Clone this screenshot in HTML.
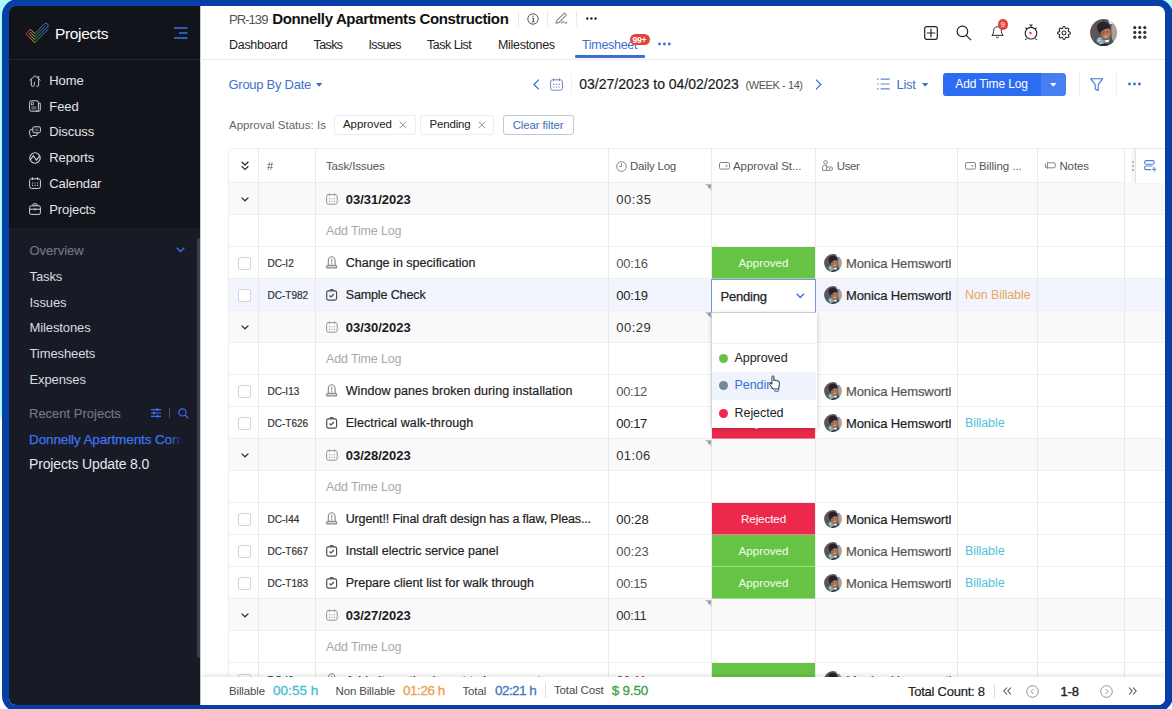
<!DOCTYPE html>
<html lang="en">
<head>
<meta charset="utf-8">
<title>Projects - Timesheet</title>
<style>
*{box-sizing:border-box;margin:0;padding:0}
html,body{width:1172px;height:709px;overflow:hidden}
body{font-family:"Liberation Sans",sans-serif;background:linear-gradient(180deg,#adfcf6 0%,#adfcf6 58.6%,#ffffff 59.4%,#ffffff 100%);position:relative;color:#222}
.frame{position:absolute;left:2px;top:-1px;width:1171px;height:712.5px;background:#063fa7;border-radius:16px}
.app{position:absolute;left:9px;top:6px;width:1156px;height:699px;border-radius:7px;overflow:hidden;background:#fff}
.page{position:absolute;left:-9px;top:-6px;width:1172px;height:709px}
.abs{position:absolute}
.t{position:absolute;white-space:nowrap;line-height:1}
svg{position:absolute;overflow:visible}
/* sidebar */
.sb{position:absolute;left:9px;top:6px;width:191px;height:699px;background:#181a26}
.sbtop{position:absolute;left:9px;top:6px;width:191px;height:222px;background:#12141c}
.sbline{position:absolute;left:9px;top:59px;width:191px;height:1px;background:#242733}
.nav{color:#e3e4e8;font-size:13px;letter-spacing:-0.1px}
.sub{color:#d9dbe0;font-size:13px;letter-spacing:-0.1px}
.muted{color:#727786;font-size:13px;-webkit-text-stroke:0.15px}

/* header */
.hline{position:absolute;left:200px;top:59px;width:965px;height:1px;background:#e9eaee}
.tab{font-size:12.5px;color:#222;letter-spacing:-0.3px}
.vsep{position:absolute;width:1px;background:#e9eaec}
.blue{color:#3a6fd6}

.th{font-size:11.5px;color:#555;letter-spacing:-0.5px}
.tm{font-size:13px;letter-spacing:0.55px}
.ft{font-size:11.5px;color:#4a4a4a;letter-spacing:-0.15px}
.fv{font-size:13.5px;letter-spacing:-0.1px;-webkit-text-stroke:0.3px}
</style>
</head>
<body>
<div class="frame"></div>
<div class="app"><div class="page">

<!-- SIDEBAR -->
<div class="sb"></div>
<div class="sbtop"></div>
<div class="sbline"></div>
<div class="abs" style="left:197px;top:238px;width:3px;height:420px;background:#3a3d4a;border-radius:2px"></div>

<svg style="left:20px;top:18px" width="40" height="30" viewBox="20 18 40 30" fill="none">
  <defs><linearGradient id="lg" gradientUnits="userSpaceOnUse" x1="26" y1="0" x2="49" y2="0"><stop offset="0" stop-color="#e2453c"/><stop offset="0.12" stop-color="#e2553f"/><stop offset="0.22" stop-color="#ea9246"/><stop offset="0.36" stop-color="#ecc152"/><stop offset="0.42" stop-color="#4a9f49"/><stop offset="0.58" stop-color="#3f9a48"/><stop offset="0.66" stop-color="#4678cf"/><stop offset="1" stop-color="#4678cf"/></linearGradient></defs>
  <path d="M48.5 28.9 L34.8 42.6 L26 33.8 L30.5 29.3 L34.8 33.6 L44.5 23.9 A2.12 2.12 0 0 1 47.5 26.9 L34.8 39.6 L29 33.8 L30.5 32.3 L34.8 36.6 L45 26.4" stroke="url(#lg)" stroke-width="0.95" stroke-linejoin="miter"/>
</svg>
<div class="t" style="left:55px;top:25.5px;font-size:15.5px;color:#fff;letter-spacing:-0.35px">Projects</div>
<svg style="left:173.5px;top:26.5px" width="14" height="12" viewBox="0 0 14 12" fill="none" stroke="#3a6df0" stroke-width="1.5">
  <path d="M0 1H13.5M5 6H13.5M0 11H13.5"/>
</svg>

<!-- nav icons -->
<svg style="left:29px;top:74.5px" width="12" height="12" viewBox="0 0 12 12" fill="none" stroke="#cfd1d7" stroke-width="1" stroke-linejoin="round">
  <path d="M0.6 5.4 L6 0.7 L11.4 5.4 M2.3 4.4 V10 Q2.3 11.2 3.5 11.2 H4.6 M9.7 4.4 V10 Q9.7 11.2 8.5 11.2 H7.2 M8.6 1.4 H9.8 V3.4"/><path d="M4.6 11.2 Q5.4 10.6 5.4 9 V7.6 Q5.4 6.8 6.2 6.8" stroke-width="0.9"/>
</svg>
<div class="t nav" style="left:49.3px;top:74px">Home</div>

<svg style="left:29px;top:100px" width="12" height="12" viewBox="0 0 12 12" fill="none" stroke="#cfd1d7" stroke-width="1">
  <rect x="0.6" y="0.8" width="8.8" height="10.4" rx="1.6"/><path d="M9.4 3.2 H11.3 V9.8 Q11.3 11.2 9.9 11.2 H7"/><rect x="2.5" y="2.8" width="2" height="2" stroke-width="0.7"/><path d="M2.4 7H7.4M2.4 8.9H7.4" stroke-width="0.7"/>
</svg>
<div class="t nav" style="left:49.3px;top:99.7px">Feed</div>

<svg style="left:29px;top:125.5px" width="12" height="12" viewBox="0 0 12 12" fill="none" stroke="#cfd1d7" stroke-width="1">
  <rect x="3.8" y="0.8" width="7.6" height="6" rx="1.3"/><path d="M3.6 3.6 H1.8 Q0.6 3.6 0.6 4.8 V8.4 Q0.6 9.5 1.8 9.5 V11.3 L3.8 9.5 H7 Q8.1 9.5 8.1 8.4 V7"/><path d="M5.6 3.1H9.6M5.6 4.7H9.6" stroke-width="0.55" opacity="0.8"/>
</svg>
<div class="t nav" style="left:49.3px;top:125.4px">Discuss</div>

<svg style="left:29px;top:151.5px" width="12" height="12" viewBox="0 0 12 12" fill="none" stroke="#d5d7dc" stroke-width="1.1">
  <circle cx="6" cy="6" r="5.2"/><path d="M1.2 8 L4.4 3.6 L7.4 8.2 L10.8 3.8"/>
</svg>
<div class="t nav" style="left:49.3px;top:151.1px">Reports</div>

<svg style="left:29px;top:177px" width="12" height="12" viewBox="0 0 12 12" fill="none" stroke="#d5d7dc" stroke-width="1">
  <rect x="0.6" y="1.8" width="10.8" height="9.6" rx="1.8"/><path d="M3.4 0.4V3M8.6 0.4V3"/><path d="M3 6h1M5.5 6h1M8 6h1M3 8.4h1M5.5 8.4h1M8 8.4h1" stroke-width="1.2"/>
</svg>
<div class="t nav" style="left:49.3px;top:176.8px">Calendar</div>

<svg style="left:29px;top:202.5px" width="12" height="12" viewBox="0 0 12 12" fill="none" stroke="#d5d7dc" stroke-width="1">
  <rect x="0.6" y="2.8" width="10.8" height="8.6" rx="1.6"/><path d="M4 2.8V1.6Q4 0.8 4.8 0.8H7.2Q8 0.8 8 1.6V2.8M0.6 6.2H11.4M6 5.2V7.4"/>
</svg>
<div class="t nav" style="left:49.3px;top:202.5px">Projects</div>

<div class="t muted" style="left:29.5px;top:244px">Overview</div>
<svg style="left:176px;top:247px" width="9" height="6" viewBox="0 0 9 6" fill="none" stroke="#3a6df0" stroke-width="1.4"><path d="M0.7 0.8 L4.5 4.6 L8.3 0.8"/></svg>
<div class="t sub" style="left:29.5px;top:270px">Tasks</div>
<div class="t sub" style="left:29.5px;top:295.7px">Issues</div>
<div class="t sub" style="left:29.5px;top:321.4px">Milestones</div>
<div class="t sub" style="left:29.5px;top:347.1px">Timesheets</div>
<div class="t sub" style="left:29.5px;top:372.8px">Expenses</div>

<div class="t muted" style="left:29px;top:406.5px">Recent Projects</div>
<svg style="left:151px;top:408px" width="10" height="10" viewBox="0 0 10 10" fill="none" stroke="#3a6df0" stroke-width="1.1"><path d="M0 1.6H10M0 5H10M0 8.4H10"/><path d="M6.2 0.2V3M3 3.6V6.4M6.6 7V9.8" stroke-width="1.8"/></svg>
<div class="abs" style="left:169px;top:408px;width:1px;height:10px;background:#4d5160"></div>
<svg style="left:177.5px;top:407.5px" width="11" height="11" viewBox="0 0 11 11" fill="none" stroke="#3a6df0" stroke-width="1.2"><circle cx="4.4" cy="4.4" r="3.6"/><path d="M7 7L10.4 10.4"/></svg>
<div class="abs" style="left:29px;top:428px;width:154px;height:22px;overflow:hidden"><div class="t" style="left:0;top:4.5px;font-size:13.5px;color:#3d74ee;-webkit-text-stroke:0.25px;letter-spacing:-0.12px">Donnelly Apartments Construction</div><div class="abs" style="right:0;top:0;width:14px;height:22px;background:linear-gradient(90deg,rgba(24,26,38,0),#181a26)"></div></div>
<div class="t" style="left:29px;top:457px;font-size:14px;color:#e6e7eb;letter-spacing:-0.15px">Projects Update 8.0</div>


<div class="abs" style="left:200px;top:6px;width:1px;height:699px;background:#c9cbd3"></div>
<div class="hline"></div>
<div class="t" style="left:229px;top:12.6px;font-size:13.2px;color:#555;letter-spacing:-1.05px">PR-139</div>
<div class="t" style="left:272.2px;top:10.7px;font-size:15px;font-weight:bold;color:#111;letter-spacing:-0.36px">Donnelly Apartments Construction</div>
<div class="vsep" style="left:518px;top:11px;height:15px"></div>
<div class="vsep" style="left:547px;top:11px;height:15px"></div>
<div class="vsep" style="left:576px;top:11px;height:15px"></div>
<svg style="left:526.5px;top:12.5px" width="12" height="12" viewBox="0 0 12 12" fill="none" stroke="#444" stroke-width="0.9"><circle cx="6" cy="6" r="5.2"/><path d="M5 5H6.3V8.6M4.8 8.8H7.6" stroke-width="1"/><circle cx="6" cy="3.2" r="0.6" fill="#444" stroke="none"/></svg>
<svg style="left:555px;top:12px" width="13" height="13" viewBox="0 0 13 13" fill="none" stroke="#8a8a8a" stroke-width="1.1"><path d="M1.2 11.2 L2 8.4 L9.4 1 L11.4 3 L4 10.4 Z M6 11.4 Q8 8.6 9.6 10.4 T12 10"/></svg>
<svg style="left:586px;top:17px" width="11" height="3" viewBox="0 0 11 3" fill="#222"><circle cx="1.3" cy="1.5" r="1.2"/><circle cx="5.4" cy="1.5" r="1.2"/><circle cx="9.5" cy="1.5" r="1.2"/></svg>

<div class="t tab" style="left:229px;top:38.5px">Dashboard</div>
<div class="t tab" style="left:313.5px;top:38.5px;letter-spacing:-0.6px">Tasks</div>
<div class="t tab" style="left:368.5px;top:38.5px;letter-spacing:-0.65px">Issues</div>
<div class="t tab" style="left:427px;top:38.5px;letter-spacing:-0.5px">Task List</div>
<div class="t tab" style="left:498px;top:38.5px">Milestones</div>
<div class="t tab blue" style="left:582px;top:38.5px">Timesheet</div>
<div class="abs" style="left:575px;top:55px;width:70px;height:2.5px;background:#3a6fd6;border-radius:1px"></div>
<div class="abs" style="left:630.3px;top:34.3px;width:19.4px;height:11px;border-radius:5.5px;background:#e2433c"></div>
<div class="t" style="left:632.6px;top:35.6px;font-size:8.6px;font-weight:bold;color:#fff;letter-spacing:-0.35px">99+</div>
<svg style="left:658px;top:42px" width="13" height="4" viewBox="0 0 13 4" fill="#3a6fd6"><circle cx="1.5" cy="2" r="1.4"/><circle cx="6.4" cy="2" r="1.4"/><circle cx="11.3" cy="2" r="1.4"/></svg>

<!-- top right icons -->
<svg style="left:924px;top:26px" width="14" height="14" viewBox="0 0 14 14" fill="none" stroke="#222" stroke-width="1.2"><rect x="0.7" y="0.7" width="12.6" height="12.6" rx="2"/><path d="M7 2.8V11.2M2.8 7H11.2"/></svg>
<svg style="left:956px;top:25px" width="16" height="16" viewBox="0 0 16 16" fill="none" stroke="#222" stroke-width="1.2"><circle cx="6.4" cy="6.4" r="5.3"/><path d="M10.2 10.4L15 15.2"/></svg>
<svg style="left:991px;top:26.3px" width="13.5" height="13.5" viewBox="0 0 15 15" fill="none" stroke="#222" stroke-width="1.1"><path d="M1 10.4 Q2.8 9 2.8 6.2 Q2.8 1 7.2 0.8 Q11.6 1 11.6 6.2 Q11.6 9 13.6 10.4 Z M5.6 12 Q7.2 14.4 8.8 12"/></svg>
<div class="abs" style="left:997.5px;top:19px;width:10.6px;height:10.6px;border-radius:50%;background:#e2433c"></div>
<div class="t" style="left:1000.4px;top:20.6px;font-size:8px;color:#fff">9</div>
<svg style="left:1023px;top:24px" width="16" height="17" viewBox="0 0 16 17" fill="none" stroke="#222" stroke-width="1.1"><circle cx="8" cy="9.2" r="5.8"/><path d="M6.4 1H9.6M8 1V3.2M2.4 3.6L4 5M13.6 3.6L12 5M3.4 14.6L2.4 16M12.6 14.6L13.6 16"/><path d="M8.6 9.2L6.4 8M8.6 9.2 L6.6 10.2" stroke="#d2303a" stroke-width="1.3"/></svg>
<svg style="left:1057px;top:25.5px" width="14" height="14" viewBox="0 0 24 24" fill="none" stroke="#222" stroke-width="1.8" stroke-linejoin="round"><circle cx="12" cy="12" r="3.3"/><path d="M19.4 15a1.65 1.65 0 0 0 .33 1.82l.06.06a2 2 0 1 1-2.83 2.83l-.06-.06a1.65 1.65 0 0 0-1.82-.33 1.65 1.65 0 0 0-1 1.51V21a2 2 0 0 1-4 0v-.09A1.65 1.65 0 0 0 9 19.4a1.65 1.65 0 0 0-1.82.33l-.06.06a2 2 0 1 1-2.83-2.83l.06-.06a1.65 1.65 0 0 0 .33-1.82 1.65 1.65 0 0 0-1.51-1H3a2 2 0 0 1 0-4h.09A1.65 1.65 0 0 0 4.6 9a1.65 1.65 0 0 0-.33-1.82l-.06-.06a2 2 0 1 1 2.83-2.83l.06.06a1.65 1.65 0 0 0 1.82.33H9a1.65 1.65 0 0 0 1-1.51V3a2 2 0 0 1 4 0v.09a1.65 1.65 0 0 0 1 1.51 1.65 1.65 0 0 0 1.82-.33l.06-.06a2 2 0 1 1 2.83 2.83l-.06.06a1.65 1.65 0 0 0-.33 1.82V9a1.65 1.65 0 0 0 1.51 1H21a2 2 0 0 1 0 4h-.09a1.65 1.65 0 0 0-1.51 1z"/></svg>
<svg style="left:1090px;top:18.7px" width="27.2" height="27.2" viewBox="0 0 27 27"><use href="#avs"/></svg>
<svg style="left:1133.2px;top:25.7px" width="14" height="13" viewBox="0 0 14 13" fill="#333"><circle cx="1.8" cy="1.6" r="1.6"/><circle cx="6.8" cy="1.6" r="1.6"/><circle cx="11.8" cy="1.6" r="1.6"/><circle cx="1.8" cy="6.4" r="1.6"/><circle cx="6.8" cy="6.4" r="1.6"/><circle cx="11.8" cy="6.4" r="1.6"/><circle cx="1.8" cy="11.2" r="1.6"/><circle cx="6.8" cy="11.2" r="1.6"/><circle cx="11.8" cy="11.2" r="1.6"/></svg>

<!-- toolbar -->
<div class="t blue" style="left:228.5px;top:77.5px;font-size:13px;letter-spacing:-0.27px;color:#3f72c9">Group By Date</div>
<svg style="left:316.3px;top:82.5px" width="7" height="4" viewBox="0 0 7 4" fill="#3a6fd6"><path d="M0 0H6.4L3.2 3.8Z"/></svg>
<svg style="left:532.5px;top:78.5px" width="7" height="11" viewBox="0 0 7 11" fill="none" stroke="#3a6fd6" stroke-width="1.3"><path d="M5.8 0.6L1 5.5L5.8 10.4"/></svg>
<svg style="left:550px;top:77.5px" width="13" height="13" viewBox="0 0 13 13" fill="none" stroke="#6b86c4" stroke-width="1"><rect x="0.6" y="1.8" width="11.8" height="10.4" rx="2"/><path d="M3.6 0.4V3M9.4 0.4V3"/><path d="M3.2 6.4h1.2M5.9 6.4h1.2M8.6 6.4h1.2M3.2 9h1.2M5.9 9h1.2M8.6 9h1.2" stroke-width="1.2"/></svg>
<div class="vsep" style="left:571px;top:74px;height:20px;background:#eeeff2"></div>
<div class="t" style="left:579.3px;top:77px;font-size:14px;color:#1c1c1c;-webkit-text-stroke:0.2px">03/27/2023 to 04/02/2023</div>
<div class="t" style="left:745.5px;top:79.5px;font-size:11px;color:#555;letter-spacing:-0.42px">(WEEK - 14)</div>
<svg style="left:814.5px;top:78.5px" width="7" height="11" viewBox="0 0 7 11" fill="none" stroke="#3a6fd6" stroke-width="1.3"><path d="M1 0.6L5.8 5.5L1 10.4"/></svg>

<svg style="left:876.5px;top:77.5px" width="13" height="12" viewBox="0 0 13 12" fill="none" stroke="#5f86d8" stroke-width="1.2"><path d="M3.6 1.2H12.8M3.6 6H12.8M3.6 10.8H12.8"/><path d="M0 1.2H1.6M0 6H1.6M0 10.8H1.6"/></svg>
<div class="t" style="left:896.5px;top:77.5px;font-size:13px;color:#3f72c9;letter-spacing:-0.25px">List</div>
<svg style="left:921.5px;top:82.5px" width="7" height="4" viewBox="0 0 7 4" fill="#3a6fd6"><path d="M0 0H6.4L3.2 3.8Z"/></svg>
<div class="abs" style="left:943px;top:72.5px;width:123px;height:23.5px;border-radius:3.5px;background:#467ff2;overflow:hidden"><div class="abs" style="left:0;top:0;width:98px;height:24px;background:#2b6cf0"></div></div>
<div class="t" style="left:955.3px;top:78.3px;font-size:12px;color:#fff;letter-spacing:-0.12px">Add Time Log</div>
<svg style="left:1049.6px;top:82.6px" width="7" height="4" viewBox="0 0 7 4" fill="#fff"><path d="M0 0H6.6L3.3 3.8Z"/></svg>
<div class="vsep" style="left:1078.5px;top:73px;height:22px;background:#eeeff2"></div>
<svg style="left:1090px;top:77.5px" width="14" height="14" viewBox="0 0 14 14" fill="none" stroke="#3f72d0" stroke-width="1.1" stroke-linejoin="round"><path d="M0.8 0.8H12.6L8.2 6.6V12.6L5.2 11V6.6Z"/></svg>
<div class="vsep" style="left:1116px;top:73px;height:22px;background:#eeeff2"></div>
<svg style="left:1127.5px;top:82.3px" width="13" height="4" viewBox="0 0 13 4" fill="#3a6fd6"><circle cx="1.5" cy="2" r="1.4"/><circle cx="6.5" cy="2" r="1.4"/><circle cx="11.5" cy="2" r="1.4"/></svg>

<!-- filter row -->
<div class="t" style="left:229px;top:119.5px;font-size:11.5px;color:#666;letter-spacing:0.02px">Approval Status: Is</div>
<div class="abs" style="left:333.5px;top:114.5px;width:82px;height:20.5px;border:1px solid #ececee;border-radius:3px;background:#fff"></div>
<div class="t" style="left:343px;top:119.3px;font-size:11.5px;color:#222;letter-spacing:-0.05px">Approved</div>
<svg style="left:399px;top:121px" width="8" height="8" viewBox="0 0 8 8" fill="none" stroke="#888" stroke-width="0.9"><path d="M0.6 0.6L7.2 7.2M7.2 0.6L0.6 7.2"/></svg>
<div class="abs" style="left:420px;top:114.5px;width:74px;height:20.5px;border:1px solid #ececee;border-radius:3px;background:#fff"></div>
<div class="t" style="left:429.6px;top:119.3px;font-size:11.5px;color:#222;letter-spacing:-0.2px">Pending</div>
<svg style="left:477.5px;top:121px" width="8" height="8" viewBox="0 0 8 8" fill="none" stroke="#888" stroke-width="0.9"><path d="M0.6 0.6L7.2 7.2M7.2 0.6L0.6 7.2"/></svg>
<div class="abs" style="left:503px;top:114.5px;width:70.5px;height:20.5px;border:1px solid #c4c8d2;border-radius:3px;background:#fff"></div>
<div class="t" style="left:512.7px;top:119.5px;font-size:11.3px;color:#3b6eb8;letter-spacing:-0.05px">Clear filter</div>

<svg width="0" height="0" style="left:0;top:0"><defs><clipPath id="avc2"><circle cx="13.5" cy="13.5" r="13.4"/></clipPath><filter id="avb" x="-10%" y="-10%" width="120%" height="120%"><feGaussianBlur stdDeviation="0.55"/></filter><g id="avs"><g clip-path="url(#avc2)"><g filter="url(#avb)"><rect x="-2" y="-2" width="31" height="31" fill="#5b5759"/><path d="M21 -1 L28 -1 L28 28 L23.5 28 Q20.5 15 21.5 6Z" fill="#a9a098"/><path d="M18 1 L22 0.5 L22.5 5 L19.5 5Z" fill="#e8e6e2"/><ellipse cx="13.3" cy="8.2" rx="6.4" ry="5.6" fill="#2a2330"/><ellipse cx="15.6" cy="14.2" rx="4.9" ry="6" fill="#b7775a"/><path d="M8.5 8 Q13 4.5 20.5 9 Q15.5 8.6 10.6 12.6 Q9.4 14 9.4 16 Q7.6 12 8.5 8Z" fill="#27202a"/><ellipse cx="13.8" cy="12.8" rx="0.9" ry="0.6" fill="#5a3528"/><ellipse cx="17.4" cy="12.8" rx="0.9" ry="0.6" fill="#5a3528"/><ellipse cx="15.8" cy="17.4" rx="1.5" ry="0.6" fill="#e6cfc4"/><ellipse cx="12.2" cy="15" rx="1.2" ry="2.4" fill="#9a5f45"/><path d="M2 28 Q3.5 19 9 17.5 L14 21.5 L20.5 19.5 Q24 21 25 28Z" fill="#3d565c"/><path d="M6 21 Q8 17.5 10.5 17.8 L15.5 22.5 L12 26 Q8 24 6 21Z" fill="#7fa3ab"/><path d="M14.5 21 L19.5 20.3 L18.5 23.2 L15.5 23.3Z" fill="#eef2f3"/><path d="M7 22.5 L11 21 M9 25 L12.5 23.5 M8 19.8 L10.5 19.4" stroke="#dfeaec" stroke-width="0.9"/><path d="M4 28 Q10 23.5 18 25 Q22 26 24 28Z" fill="#2d2b30"/></g></g></g></defs></svg><div class="abs" style="left:228px;top:148.4px;width:940px;height:560px;border:1px solid #efeff0;border-radius:5px 0 0 0;background:#fff"></div>
<div class="abs" style="left:229px;top:183px;width:936px;height:32px;background:#f9f9fa"></div>
<div class="abs" style="left:229px;top:279px;width:936px;height:32px;background:#f2f5fd"></div>
<div class="abs" style="left:229px;top:311px;width:936px;height:32px;background:#f9f9fa"></div>
<div class="abs" style="left:229px;top:439px;width:936px;height:32px;background:#f9f9fa"></div>
<div class="abs" style="left:229px;top:599px;width:936px;height:32px;background:#f9f9fa"></div>
<div class="abs" style="left:229px;top:182px;width:936px;height:1px;background:#efeff1"></div>
<div class="abs" style="left:229px;top:214px;width:936px;height:1px;background:#efeff1"></div>
<div class="abs" style="left:229px;top:246px;width:936px;height:1px;background:#efeff1"></div>
<div class="abs" style="left:229px;top:278px;width:936px;height:1px;background:#efeff1"></div>
<div class="abs" style="left:229px;top:310px;width:936px;height:1px;background:#efeff1"></div>
<div class="abs" style="left:229px;top:342px;width:936px;height:1px;background:#efeff1"></div>
<div class="abs" style="left:229px;top:374px;width:936px;height:1px;background:#efeff1"></div>
<div class="abs" style="left:229px;top:406px;width:936px;height:1px;background:#efeff1"></div>
<div class="abs" style="left:229px;top:438px;width:936px;height:1px;background:#efeff1"></div>
<div class="abs" style="left:229px;top:470px;width:936px;height:1px;background:#efeff1"></div>
<div class="abs" style="left:229px;top:502px;width:936px;height:1px;background:#efeff1"></div>
<div class="abs" style="left:229px;top:534px;width:936px;height:1px;background:#efeff1"></div>
<div class="abs" style="left:229px;top:566px;width:936px;height:1px;background:#efeff1"></div>
<div class="abs" style="left:229px;top:598px;width:936px;height:1px;background:#efeff1"></div>
<div class="abs" style="left:229px;top:630px;width:936px;height:1px;background:#efeff1"></div>
<div class="abs" style="left:229px;top:662px;width:936px;height:1px;background:#efeff1"></div>
<div class="abs" style="left:229px;top:694px;width:936px;height:1px;background:#efeff1"></div>
<div class="abs" style="left:258.3px;top:149px;width:1px;height:556px;background:#e9eaee"></div>
<div class="abs" style="left:315.1px;top:149px;width:1px;height:556px;background:#e9eaee"></div>
<div class="abs" style="left:607.7px;top:149px;width:1px;height:556px;background:#e9eaee"></div>
<div class="abs" style="left:710.7px;top:149px;width:1px;height:556px;background:#e9eaee"></div>
<div class="abs" style="left:815.3px;top:149px;width:1px;height:556px;background:#e9eaee"></div>
<div class="abs" style="left:957.3px;top:149px;width:1px;height:556px;background:#e9eaee"></div>
<div class="abs" style="left:1037.1px;top:149px;width:1px;height:556px;background:#e9eaee"></div>
<div class="abs" style="left:1124.1px;top:149px;width:1px;height:556px;background:#e9eaee"></div>
<svg style="left:240.5px;top:160.5px" width="8" height="10" viewBox="0 0 8 10" fill="none" stroke="#333" stroke-width="1.3"><path d="M0.6 0.8L4 4L7.4 0.8M0.6 5.2L4 8.4L7.4 5.2"/></svg>
<div class="t th" style="left:267px;top:160.5px;font-size:11px">#</div>
<div class="t th" style="left:326px;top:160.8px;letter-spacing:-0.14px">Task/Issues</div>
<svg style="left:615.5px;top:160.5px" width="11" height="11" viewBox="0 0 11 11" fill="none" stroke="#777" stroke-width="0.9"><circle cx="5.5" cy="5.5" r="4.8"/><path d="M5.5 2.6V5.6H3.4"/></svg>
<div class="t th" style="left:630px;top:160.8px;letter-spacing:-0.21px">Daily Log</div>
<svg style="left:718.5px;top:162px" width="11" height="8" viewBox="0 0 11 8" fill="none" stroke="#777" stroke-width="0.9"><rect x="0.5" y="0.5" width="10" height="6.6" rx="1.4"/><path d="M6.6 3.8H8.4" stroke-width="1.2"/></svg>
<div class="t th" style="left:733px;top:160.8px;letter-spacing:-0.05px">Approval St...</div>
<svg style="left:822px;top:160px" width="11" height="11" viewBox="0 0 11 11" fill="none" stroke="#777" stroke-width="0.9"><circle cx="3.6" cy="2.4" r="1.8"/><path d="M0.6 10.4V7.4Q0.6 5.4 2.6 5.4H4.6V10.4ZM4.6 7H9.4Q10.4 7 10.4 8V9.4Q10.4 10.4 9.4 10.4H4.6M7 8.7H8.6"/></svg>
<div class="t th" style="left:836.8px;top:160.8px;letter-spacing:-0.45px">User</div>
<svg style="left:964.5px;top:162px" width="11" height="8" viewBox="0 0 11 8" fill="none" stroke="#777" stroke-width="0.9"><rect x="0.5" y="0.5" width="10" height="6.6" rx="1.4"/><path d="M6.6 3.8H8.4" stroke-width="1.2"/></svg>
<div class="t th" style="left:979px;top:160.8px;letter-spacing:-0.07px">Billing ...</div>
<svg style="left:1045px;top:161px" width="11" height="9" viewBox="0 0 11 9" fill="none" stroke="#777" stroke-width="0.9"><path d="M2.4 1.2V7.8M2.4 1.8H9.2Q10.2 1.8 10.2 2.8V5.8Q10.2 6.8 9.2 6.8H2.4M0.4 2.6V6.2H2.4"/></svg>
<div class="t th" style="left:1059.4px;top:160.8px;letter-spacing:-0.1px">Notes</div>
<div class="abs" style="left:1125.5px;top:149px;width:9px;height:34px;background:#fff"></div>
<div class="abs" style="left:1131.5px;top:161px;width:2px;height:2px;background:#c5c5c8;box-shadow:0 4px 0 #c5c5c8,0 8px 0 #c5c5c8"></div>
<div class="abs" style="left:1134.5px;top:149px;width:31px;height:34px;background:#fff;border-left:1px solid #e3e3e6;box-shadow:-3px 0 4px rgba(0,0,0,0.06)"></div>
<svg style="left:1144px;top:159.5px" width="13" height="12" viewBox="0 0 13 12" fill="none" stroke="#4c7fd6" stroke-width="1.1"><rect x="0.6" y="0.6" width="9.6" height="3.6" rx="1.6"/><path d="M7 9.6H2.2Q0.6 9.6 0.6 8V7.6Q0.6 6 2.2 6H8.6"/><path d="M10.2 7V11.6M7.9 9.3H12.5" stroke-width="1"/></svg>
<svg style="left:240.5px;top:197px" width="8" height="5" viewBox="0 0 8 5" fill="none" stroke="#333" stroke-width="1.3"><path d="M0.6 0.6L4 3.8L7.4 0.6"/></svg>
<svg style="left:326px;top:193px" width="12" height="12" viewBox="0 0 12 12" fill="none" stroke="#8a8a8a" stroke-width="0.9"><rect x="0.6" y="1.6" width="10.6" height="9.6" rx="1.8"/><path d="M3.2 0.4V2.8M8.6 0.4V2.8"/><path d="M3 5.8h0.9M5.45 5.8h0.9M7.9 5.8h0.9M3 8.2h0.9M5.45 8.2h0.9M7.9 8.2h0.9" stroke-width="1.1"/></svg>
<div class="t" style="left:345.7px;top:192.8px;font-size:13px;font-weight:bold;color:#1a1a1a">03/31/2023</div>
<div class="t tm" style="left:616.3px;top:192.8px;color:#333;letter-spacing:0.55px">00:35</div>
<svg style="left:704.5px;top:183.5px" width="7" height="7" viewBox="0 0 7 7"><path d="M0 0H6.5V6.5Z" fill="#bdbdc2"/><path d="M4.6 1.2L4.2 3.6" stroke="#333" stroke-width="0.7"/></svg>
<div class="t" style="left:326px;top:225px;font-size:12.5px;color:#a9a9a9;letter-spacing:-0.15px">Add Time Log</div>
<div class="abs" style="left:238px;top:257px;width:12.6px;height:12.6px;border:1px solid #d2d3d6;border-radius:2px;background:#fff"></div>
<div class="t" style="left:267.5px;top:258.5px;font-size:10px;color:#333;-webkit-text-stroke:0.2px;letter-spacing:0.02px">DC-I2</div>
<svg style="left:326px;top:256px" width="12" height="13" viewBox="0 0 12 13" fill="none" stroke="#7d7d80" stroke-width="1"><path d="M2.3 9.2V5Q2.3 0.8 5.7 0.8Q9.1 0.8 9.1 5V9.2"/><path d="M0.7 12V10.2Q0.7 9.3 1.6 9.3H9.8Q10.7 9.3 10.7 10.2V12Z" fill="#d5d5d7"/><path d="M5.7 2.8V6.4" stroke-width="0.9"/><circle cx="5.7" cy="7.8" r="0.35"/></svg>
<div class="t" style="left:345.7px;top:257.4px;font-size:12.5px;color:#222;-webkit-text-stroke:0.2px #222;letter-spacing:0.02px">Change in specification</div>
<div class="t tm" style="left:616.3px;top:256.8px;color:#555;letter-spacing:-0.2px">00:16</div>
<div class="abs" style="left:712px;top:247px;width:102.6px;height:32px;background:#66c344"></div>
<div class="abs" style="left:712px;top:278px;width:102.6px;height:1px;background:rgba(255,255,255,0.38)"></div>
<div class="t" style="left:712px;width:103px;text-align:center;top:257.3px;font-size:11.6px;color:rgba(255,255,255,0.84);-webkit-text-stroke:0.2px;letter-spacing:0.05px">Approved</div>
<svg style="left:824px;top:254px" width="18" height="18" viewBox="0 0 27 27"><use href="#avs"/></svg>
<div class="abs" style="left:846px;top:248px;width:105px;height:30px;overflow:hidden"><div class="t" style="left:0;top:9px;font-size:13px;color:#555;-webkit-text-stroke:0.2px;letter-spacing:-0.1px">Monica Hemsworth</div></div>
<div class="abs" style="left:238px;top:289px;width:12.6px;height:12.6px;border:1px solid #d2d3d6;border-radius:2px;background:#fff"></div>
<div class="t" style="left:267.5px;top:290.5px;font-size:10px;color:#333;-webkit-text-stroke:0.2px;letter-spacing:0.02px">DC-T982</div>
<svg style="left:326px;top:289px" width="12" height="12" viewBox="0 0 12 12" fill="none" stroke="#4a4a4d" stroke-width="1.15"><rect x="0.7" y="1.9" width="9.9" height="9.2" rx="1.8"/><path d="M4 2V0.9Q4 0.5 4.4 0.5H6.9Q7.3 0.5 7.3 0.9V2" stroke-width="1"/><path d="M3.5 6.5L5 8L7.9 5"/></svg>
<div class="t" style="left:345.7px;top:289.4px;font-size:12.5px;color:#222;-webkit-text-stroke:0.2px #222;letter-spacing:-0.12px">Sample Check</div>
<div class="t tm" style="left:616.3px;top:288.8px;color:#222;letter-spacing:-0.2px">00:19</div>
<svg style="left:824px;top:286px" width="18" height="18" viewBox="0 0 27 27"><use href="#avs"/></svg>
<div class="abs" style="left:846px;top:280px;width:105px;height:30px;overflow:hidden"><div class="t" style="left:0;top:9px;font-size:13px;color:#222;-webkit-text-stroke:0.2px;letter-spacing:-0.1px">Monica Hemsworth</div></div>
<div class="t" style="left:965px;top:289px;font-size:12.5px;color:#e9a660;letter-spacing:-0.1px">Non Billable</div>
<svg style="left:240.5px;top:325px" width="8" height="5" viewBox="0 0 8 5" fill="none" stroke="#333" stroke-width="1.3"><path d="M0.6 0.6L4 3.8L7.4 0.6"/></svg>
<svg style="left:326px;top:321px" width="12" height="12" viewBox="0 0 12 12" fill="none" stroke="#8a8a8a" stroke-width="0.9"><rect x="0.6" y="1.6" width="10.6" height="9.6" rx="1.8"/><path d="M3.2 0.4V2.8M8.6 0.4V2.8"/><path d="M3 5.8h0.9M5.45 5.8h0.9M7.9 5.8h0.9M3 8.2h0.9M5.45 8.2h0.9M7.9 8.2h0.9" stroke-width="1.1"/></svg>
<div class="t" style="left:345.7px;top:320.8px;font-size:13px;font-weight:bold;color:#1a1a1a">03/30/2023</div>
<div class="t tm" style="left:616.3px;top:320.8px;color:#333;letter-spacing:0.45px">00:29</div>
<svg style="left:704.5px;top:311.5px" width="7" height="7" viewBox="0 0 7 7"><path d="M0 0H6.5V6.5Z" fill="#bdbdc2"/><path d="M4.6 1.2L4.2 3.6" stroke="#333" stroke-width="0.7"/></svg>
<div class="t" style="left:326px;top:353px;font-size:12.5px;color:#a9a9a9;letter-spacing:-0.15px">Add Time Log</div>
<div class="abs" style="left:238px;top:385px;width:12.6px;height:12.6px;border:1px solid #d2d3d6;border-radius:2px;background:#fff"></div>
<div class="t" style="left:267.5px;top:386.5px;font-size:10px;color:#333;-webkit-text-stroke:0.2px;letter-spacing:0.02px">DC-I13</div>
<svg style="left:326px;top:384px" width="12" height="13" viewBox="0 0 12 13" fill="none" stroke="#7d7d80" stroke-width="1"><path d="M2.3 9.2V5Q2.3 0.8 5.7 0.8Q9.1 0.8 9.1 5V9.2"/><path d="M0.7 12V10.2Q0.7 9.3 1.6 9.3H9.8Q10.7 9.3 10.7 10.2V12Z" fill="#d5d5d7"/><path d="M5.7 2.8V6.4" stroke-width="0.9"/><circle cx="5.7" cy="7.8" r="0.35"/></svg>
<div class="t" style="left:345.7px;top:385.4px;font-size:12.5px;color:#222;-webkit-text-stroke:0.2px #222;letter-spacing:0.06px">Window panes broken during installation</div>
<div class="t tm" style="left:616.3px;top:384.8px;color:#555;letter-spacing:-0.4px">00:12</div>
<svg style="left:824px;top:382px" width="18" height="18" viewBox="0 0 27 27"><use href="#avs"/></svg>
<div class="abs" style="left:846px;top:376px;width:105px;height:30px;overflow:hidden"><div class="t" style="left:0;top:9px;font-size:13px;color:#555;-webkit-text-stroke:0.2px;letter-spacing:-0.1px">Monica Hemsworth</div></div>
<div class="abs" style="left:238px;top:417px;width:12.6px;height:12.6px;border:1px solid #d2d3d6;border-radius:2px;background:#fff"></div>
<div class="t" style="left:267.5px;top:418.5px;font-size:10px;color:#333;-webkit-text-stroke:0.2px;letter-spacing:0.02px">DC-T626</div>
<svg style="left:326px;top:417px" width="12" height="12" viewBox="0 0 12 12" fill="none" stroke="#4a4a4d" stroke-width="1.15"><rect x="0.7" y="1.9" width="9.9" height="9.2" rx="1.8"/><path d="M4 2V0.9Q4 0.5 4.4 0.5H6.9Q7.3 0.5 7.3 0.9V2" stroke-width="1"/><path d="M3.5 6.5L5 8L7.9 5"/></svg>
<div class="t" style="left:345.7px;top:417.4px;font-size:12.5px;color:#222;-webkit-text-stroke:0.2px #222;letter-spacing:0.08px">Electrical walk-through</div>
<div class="t tm" style="left:616.3px;top:416.8px;color:#222;letter-spacing:-0.4px">00:17</div>
<div class="abs" style="left:712px;top:407px;width:102.6px;height:32px;background:#ec294c"></div>
<div class="abs" style="left:712px;top:438px;width:102.6px;height:1px;background:rgba(255,255,255,0.38)"></div>
<div class="t" style="left:712px;width:103px;text-align:center;top:417.3px;font-size:11.6px;color:rgba(255,255,255,0.86);-webkit-text-stroke:0.2px;letter-spacing:-0.1px">Rejected</div>
<svg style="left:824px;top:414px" width="18" height="18" viewBox="0 0 27 27"><use href="#avs"/></svg>
<div class="abs" style="left:846px;top:408px;width:105px;height:30px;overflow:hidden"><div class="t" style="left:0;top:9px;font-size:13px;color:#222;-webkit-text-stroke:0.2px;letter-spacing:-0.1px">Monica Hemsworth</div></div>
<div class="t" style="left:965px;top:417px;font-size:12.5px;color:#52c1d8;letter-spacing:-0.1px">Billable</div>
<svg style="left:240.5px;top:453px" width="8" height="5" viewBox="0 0 8 5" fill="none" stroke="#333" stroke-width="1.3"><path d="M0.6 0.6L4 3.8L7.4 0.6"/></svg>
<svg style="left:326px;top:449px" width="12" height="12" viewBox="0 0 12 12" fill="none" stroke="#8a8a8a" stroke-width="0.9"><rect x="0.6" y="1.6" width="10.6" height="9.6" rx="1.8"/><path d="M3.2 0.4V2.8M8.6 0.4V2.8"/><path d="M3 5.8h0.9M5.45 5.8h0.9M7.9 5.8h0.9M3 8.2h0.9M5.45 8.2h0.9M7.9 8.2h0.9" stroke-width="1.1"/></svg>
<div class="t" style="left:345.7px;top:448.8px;font-size:13px;font-weight:bold;color:#1a1a1a">03/28/2023</div>
<div class="t tm" style="left:616.3px;top:448.8px;color:#333;letter-spacing:0.34px">01:06</div>
<svg style="left:704.5px;top:439.5px" width="7" height="7" viewBox="0 0 7 7"><path d="M0 0H6.5V6.5Z" fill="#bdbdc2"/><path d="M4.6 1.2L4.2 3.6" stroke="#333" stroke-width="0.7"/></svg>
<div class="t" style="left:326px;top:481px;font-size:12.5px;color:#a9a9a9;letter-spacing:-0.15px">Add Time Log</div>
<div class="abs" style="left:238px;top:513px;width:12.6px;height:12.6px;border:1px solid #d2d3d6;border-radius:2px;background:#fff"></div>
<div class="t" style="left:267.5px;top:514.5px;font-size:10px;color:#333;-webkit-text-stroke:0.2px;letter-spacing:0.02px">DC-I44</div>
<svg style="left:326px;top:512px" width="12" height="13" viewBox="0 0 12 13" fill="none" stroke="#7d7d80" stroke-width="1"><path d="M2.3 9.2V5Q2.3 0.8 5.7 0.8Q9.1 0.8 9.1 5V9.2"/><path d="M0.7 12V10.2Q0.7 9.3 1.6 9.3H9.8Q10.7 9.3 10.7 10.2V12Z" fill="#d5d5d7"/><path d="M5.7 2.8V6.4" stroke-width="0.9"/><circle cx="5.7" cy="7.8" r="0.35"/></svg>
<div class="t" style="left:345.7px;top:513.4px;font-size:12.5px;color:#222;-webkit-text-stroke:0.2px #222;letter-spacing:-0.13px">Urgent!! Final draft design has a flaw, Pleas...</div>
<div class="t tm" style="left:616.3px;top:512.8px;color:#222;letter-spacing:0px">00:28</div>
<div class="abs" style="left:712px;top:503px;width:102.6px;height:32px;background:#ec294c"></div>
<div class="abs" style="left:712px;top:534px;width:102.6px;height:1px;background:rgba(255,255,255,0.38)"></div>
<div class="t" style="left:712px;width:103px;text-align:center;top:513.3px;font-size:11.6px;color:rgba(255,255,255,0.86);-webkit-text-stroke:0.2px;letter-spacing:-0.1px">Rejected</div>
<svg style="left:824px;top:510px" width="18" height="18" viewBox="0 0 27 27"><use href="#avs"/></svg>
<div class="abs" style="left:846px;top:504px;width:105px;height:30px;overflow:hidden"><div class="t" style="left:0;top:9px;font-size:13px;color:#222;-webkit-text-stroke:0.2px;letter-spacing:-0.1px">Monica Hemsworth</div></div>
<div class="abs" style="left:238px;top:545px;width:12.6px;height:12.6px;border:1px solid #d2d3d6;border-radius:2px;background:#fff"></div>
<div class="t" style="left:267.5px;top:546.5px;font-size:10px;color:#333;-webkit-text-stroke:0.2px;letter-spacing:0.02px">DC-T667</div>
<svg style="left:326px;top:545px" width="12" height="12" viewBox="0 0 12 12" fill="none" stroke="#4a4a4d" stroke-width="1.15"><rect x="0.7" y="1.9" width="9.9" height="9.2" rx="1.8"/><path d="M4 2V0.9Q4 0.5 4.4 0.5H6.9Q7.3 0.5 7.3 0.9V2" stroke-width="1"/><path d="M3.5 6.5L5 8L7.9 5"/></svg>
<div class="t" style="left:345.7px;top:545.4px;font-size:12.5px;color:#222;-webkit-text-stroke:0.2px #222;letter-spacing:0px">Install electric service panel</div>
<div class="t tm" style="left:616.3px;top:544.8px;color:#555;letter-spacing:0px">00:23</div>
<div class="abs" style="left:712px;top:535px;width:102.6px;height:32px;background:#66c344"></div>
<div class="abs" style="left:712px;top:566px;width:102.6px;height:1px;background:rgba(255,255,255,0.38)"></div>
<div class="t" style="left:712px;width:103px;text-align:center;top:545.3px;font-size:11.6px;color:rgba(255,255,255,0.84);-webkit-text-stroke:0.2px;letter-spacing:0.05px">Approved</div>
<svg style="left:824px;top:542px" width="18" height="18" viewBox="0 0 27 27"><use href="#avs"/></svg>
<div class="abs" style="left:846px;top:536px;width:105px;height:30px;overflow:hidden"><div class="t" style="left:0;top:9px;font-size:13px;color:#555;-webkit-text-stroke:0.2px;letter-spacing:-0.1px">Monica Hemsworth</div></div>
<div class="t" style="left:965px;top:545px;font-size:12.5px;color:#52c1d8;letter-spacing:-0.1px">Billable</div>
<div class="abs" style="left:238px;top:577px;width:12.6px;height:12.6px;border:1px solid #d2d3d6;border-radius:2px;background:#fff"></div>
<div class="t" style="left:267.5px;top:578.5px;font-size:10px;color:#333;-webkit-text-stroke:0.2px;letter-spacing:0.02px">DC-T183</div>
<svg style="left:326px;top:577px" width="12" height="12" viewBox="0 0 12 12" fill="none" stroke="#4a4a4d" stroke-width="1.15"><rect x="0.7" y="1.9" width="9.9" height="9.2" rx="1.8"/><path d="M4 2V0.9Q4 0.5 4.4 0.5H6.9Q7.3 0.5 7.3 0.9V2" stroke-width="1"/><path d="M3.5 6.5L5 8L7.9 5"/></svg>
<div class="t" style="left:345.7px;top:577.4px;font-size:12.5px;color:#222;-webkit-text-stroke:0.2px #222;letter-spacing:0px">Prepare client list for walk through</div>
<div class="t tm" style="left:616.3px;top:576.8px;color:#555;letter-spacing:-0.4px">00:15</div>
<div class="abs" style="left:712px;top:567px;width:102.6px;height:32px;background:#66c344"></div>
<div class="abs" style="left:712px;top:598px;width:102.6px;height:1px;background:rgba(255,255,255,0.38)"></div>
<div class="t" style="left:712px;width:103px;text-align:center;top:577.3px;font-size:11.6px;color:rgba(255,255,255,0.84);-webkit-text-stroke:0.2px;letter-spacing:0.05px">Approved</div>
<svg style="left:824px;top:574px" width="18" height="18" viewBox="0 0 27 27"><use href="#avs"/></svg>
<div class="abs" style="left:846px;top:568px;width:105px;height:30px;overflow:hidden"><div class="t" style="left:0;top:9px;font-size:13px;color:#555;-webkit-text-stroke:0.2px;letter-spacing:-0.1px">Monica Hemsworth</div></div>
<div class="t" style="left:965px;top:577px;font-size:12.5px;color:#52c1d8;letter-spacing:-0.1px">Billable</div>
<svg style="left:240.5px;top:613px" width="8" height="5" viewBox="0 0 8 5" fill="none" stroke="#333" stroke-width="1.3"><path d="M0.6 0.6L4 3.8L7.4 0.6"/></svg>
<svg style="left:326px;top:609px" width="12" height="12" viewBox="0 0 12 12" fill="none" stroke="#8a8a8a" stroke-width="0.9"><rect x="0.6" y="1.6" width="10.6" height="9.6" rx="1.8"/><path d="M3.2 0.4V2.8M8.6 0.4V2.8"/><path d="M3 5.8h0.9M5.45 5.8h0.9M7.9 5.8h0.9M3 8.2h0.9M5.45 8.2h0.9M7.9 8.2h0.9" stroke-width="1.1"/></svg>
<div class="t" style="left:345.7px;top:608.8px;font-size:13px;font-weight:bold;color:#1a1a1a">03/27/2023</div>
<div class="t tm" style="left:616.3px;top:608.8px;color:#333;letter-spacing:-0.26px">00:11</div>
<svg style="left:704.5px;top:599.5px" width="7" height="7" viewBox="0 0 7 7"><path d="M0 0H6.5V6.5Z" fill="#bdbdc2"/><path d="M4.6 1.2L4.2 3.6" stroke="#333" stroke-width="0.7"/></svg>
<div class="t" style="left:326px;top:641px;font-size:12.5px;color:#a9a9a9;letter-spacing:-0.15px">Add Time Log</div>
<div class="abs" style="left:238px;top:674.3px;width:12.6px;height:12.6px;border:1px solid #d2d3d6;border-radius:2px;background:#fff"></div>
<div class="t" style="left:267.5px;top:675.8px;font-size:10px;color:#333;-webkit-text-stroke:0.2px;letter-spacing:0.02px">DC-I9</div>
<svg style="left:326px;top:673.3px" width="12" height="13" viewBox="0 0 12 13" fill="none" stroke="#7d7d80" stroke-width="1"><path d="M2.3 9.2V5Q2.3 0.8 5.7 0.8Q9.1 0.8 9.1 5V9.2"/><path d="M0.7 12V10.2Q0.7 9.3 1.6 9.3H9.8Q10.7 9.3 10.7 10.2V12Z" fill="#d5d5d7"/><path d="M5.7 2.8V6.4" stroke-width="0.9"/><circle cx="5.7" cy="7.8" r="0.35"/></svg>
<div class="t" style="left:345.7px;top:674.7px;font-size:12.5px;color:#222;-webkit-text-stroke:0.2px #222;letter-spacing:0px">Add alternative layout to improve storage</div>
<div class="t tm" style="left:616.3px;top:674.1px;color:#555;letter-spacing:-0.26px">00:11</div>
<div class="abs" style="left:712px;top:663px;width:102.6px;height:32px;background:#66c344"></div>
<div class="abs" style="left:712px;top:694px;width:102.6px;height:1px;background:rgba(255,255,255,0.38)"></div>
<div class="t" style="left:712px;width:103px;text-align:center;top:674.6px;font-size:11.6px;color:rgba(255,255,255,0.84);-webkit-text-stroke:0.2px;letter-spacing:0.05px">Approved</div>
<svg style="left:824px;top:671.3px" width="18" height="18" viewBox="0 0 27 27"><use href="#avs"/></svg>
<div class="abs" style="left:846px;top:665.3px;width:105px;height:30px;overflow:hidden"><div class="t" style="left:0;top:9px;font-size:13px;color:#555;-webkit-text-stroke:0.2px;letter-spacing:-0.1px">Monica Hemsworth</div></div>
<!-- select + dropdown -->
<div class="abs" style="left:711px;top:279px;width:105px;height:33.5px;background:#fff;border:1px solid #7397de;border-bottom-color:#d9dce3"></div>
<div class="t" style="left:720.5px;top:289.8px;font-size:13px;color:#222;-webkit-text-stroke:0.25px;letter-spacing:-0.22px">Pending</div>
<svg style="left:796px;top:293.3px" width="9" height="6" viewBox="0 0 9 6" fill="none" stroke="#3a6fd6" stroke-width="1.3"><path d="M0.7 0.7L4.3 4.5L7.9 0.7"/></svg>
<div class="abs" style="left:711.5px;top:312.5px;width:105px;height:115px;background:#fff;box-shadow:0 1px 5px rgba(0,0,0,0.22)"></div>
<div class="abs" style="left:712px;top:343px;width:104px;height:1px;background:#f0f0f2"></div>
<div class="abs" style="left:712px;top:372px;width:104px;height:27.5px;background:#eef3fc"></div>
<div class="abs" style="left:718.8px;top:354px;width:9px;height:9px;border-radius:50%;background:#67c23f"></div>
<div class="t" style="left:734.5px;top:352px;font-size:12.5px;color:#222;letter-spacing:-0.05px">Approved</div>
<div class="abs" style="left:718.8px;top:381.3px;width:9px;height:9px;border-radius:50%;background:#75879a"></div>
<div class="t" style="left:734.5px;top:379.3px;font-size:12.5px;color:#3a6fd6;letter-spacing:-0.05px">Pending</div>
<div class="abs" style="left:718.8px;top:409px;width:9px;height:9px;border-radius:50%;background:#ec294c"></div>
<div class="t" style="left:734.5px;top:407px;font-size:12.5px;color:#222;letter-spacing:-0.05px">Rejected</div>
<!-- cursor -->
<svg style="left:768.8px;top:374.8px" width="11.3" height="15" viewBox="0 0 13 17" fill="#fff" stroke="#222" stroke-width="1" stroke-linejoin="round"><path d="M3.4 9.6V2Q3.4 0.8 4.5 0.8Q5.6 0.8 5.6 2V6.4Q5.6 5.4 6.7 5.4Q7.7 5.4 7.7 6.8Q7.8 6 8.8 6Q9.8 6 9.8 7.4Q10 6.8 10.8 6.8Q11.8 6.8 11.8 8V11.6Q11.8 14.4 10.4 16H4.6Q3.4 14 1.2 11.4Q0.4 10.2 1.2 9.6Q2.2 9 3.4 10.6Z"/></svg>

<!-- footer -->
<div class="abs" style="left:201px;top:677px;width:964px;height:28px;background:#fff;box-shadow:0 -2px 5px rgba(0,0,0,0.10)"></div>
<div class="t ft" style="left:229px;top:685.5px">Billable</div>
<div class="t fv" style="left:273px;top:684.3px;color:#45bcd6;letter-spacing:0.05px">00:55 h</div>
<div class="t ft" style="left:335.5px;top:685.5px">Non Billable</div>
<div class="t fv" style="left:403px;top:684.3px;color:#e9a04a;letter-spacing:-0.45px">01:26 h</div>
<div class="t ft" style="left:462.5px;top:685.5px">Total</div>
<div class="t fv" style="left:495px;top:684.3px;color:#3f73c8;letter-spacing:-0.55px">02:21 h</div>
<div class="abs" style="left:545.3px;top:683px;width:1px;height:15px;background:#dcdde1"></div>
<div class="t ft" style="left:554px;top:685.3px">Total Cost</div>
<div class="t fv" style="left:611.7px;top:684.3px;color:#3f9f45;letter-spacing:-0.2px">$ 9.50</div>
<div class="t" style="left:908px;top:684.5px;font-size:13px;color:#222;-webkit-text-stroke:0.2px;letter-spacing:-0.25px">Total Count: 8</div>
<div class="abs" style="left:993.5px;top:684px;width:1px;height:14px;background:#dcdde1"></div>
<svg style="left:1003px;top:687px" width="9" height="8" viewBox="0 0 9 8" fill="none" stroke="#555" stroke-width="1.1"><path d="M4 0.5L0.8 4L4 7.5M8 0.5L4.8 4L8 7.5"/></svg>
<svg style="left:1026px;top:684.5px" width="13" height="13" viewBox="0 0 13 13" fill="none" stroke="#888" stroke-width="0.9"><circle cx="6.5" cy="6.5" r="5.8"/><path d="M7.4 4L5 6.5L7.4 9"/></svg>
<div class="t" style="left:1060.5px;top:684.5px;font-size:13px;color:#222;-webkit-text-stroke:0.4px;letter-spacing:-0.2px">1-8</div>
<svg style="left:1100px;top:684.5px" width="13" height="13" viewBox="0 0 13 13" fill="none" stroke="#888" stroke-width="0.9"><circle cx="6.5" cy="6.5" r="5.8"/><path d="M5.6 4L8 6.5L5.6 9"/></svg>
<svg style="left:1127.5px;top:687px" width="9" height="8" viewBox="0 0 9 8" fill="none" stroke="#555" stroke-width="1.1"><path d="M1 0.5L4.2 4L1 7.5M5 0.5L8.2 4L5 7.5"/></svg>


</div></div>
</body>
</html>
